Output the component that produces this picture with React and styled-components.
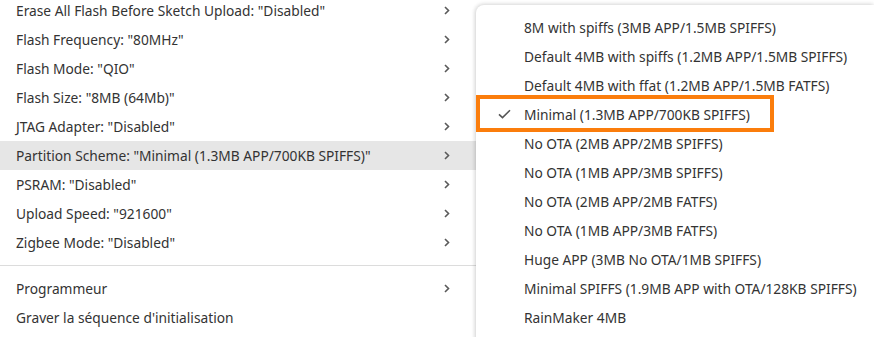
import React from "react";
import styled, { createGlobalStyle } from "styled-components";

const GlobalStyle = createGlobalStyle`
  html, body { margin: 0; padding: 0; background: #ffffff; overflow: hidden; }
  body { font-family: "Noto Sans", "Open Sans", sans-serif; font-size: 13.75px; color: #333333; }
`;

const Screen = styled.div`
  display: flex;
  align-items: flex-start;
  width: 874px;
  height: 337px;
  overflow: hidden;
  background: #ffffff;
`;

const MainMenu = styled.div`
  flex: 0 0 476px;
  margin-top: -4px;
  display: flex;
  flex-direction: column;
  background: #ffffff;
`;

const MenuRow = styled.div`
  height: 29px;
  display: flex;
  align-items: center;
  justify-content: space-between;
  padding: 0 26px 0 16px;
  white-space: nowrap;
  background: ${(p) => (p.$active ? "#e6e6e6" : "transparent")};
`;

const Separator = styled.div`
  height: 1px;
  margin: 8px 0;
  background: #dcdcdc;
`;

const Chevron = styled.svg`
  width: 6px;
  height: 9px;
  flex: none;
`;

const SubMenu = styled.div`
  flex: 1;
  margin-top: 5px;
  height: 360px;
  padding-top: 7.5px;
  display: flex;
  flex-direction: column;
  background: #ffffff;
  border-top-left-radius: 8px;
  box-shadow: -1px 0 4px rgba(0, 0, 0, 0.14), 0 -1px 5px rgba(0, 0, 0, 0.08);
`;

const SubRow = styled.div`
  position: relative;
  height: 29px;
  display: flex;
  align-items: center;
  white-space: nowrap;
`;

const CheckSlot = styled.div`
  width: 48px;
  flex: none;
  box-sizing: border-box;
  display: flex;
  justify-content: flex-start;
  padding-left: 22px;
`;

const Highlight = styled.div`
  position: absolute;
  left: 0;
  top: -4.5px;
  width: 298px;
  height: 37px;
  box-sizing: border-box;
  border: 4px solid #fb7d0c;
  pointer-events: none;
`;

const ChevronIcon = () => (
  <Chevron viewBox="0 0 6 9">
    <polyline points="1,1 4.5,4.5 1,8" fill="none" stroke="#5a5a5a" strokeWidth="1.6" />
  </Chevron>
);

const CheckIcon = () => (
  <svg width="13" height="10" viewBox="0 0 13 10">
    <polyline points="1,5.3 4.5,8.6 12,1.2" fill="none" stroke="#555" strokeWidth="1.6" />
  </svg>
);

const mainItems = [
  'Erase All Flash Before Sketch Upload: "Disabled"',
  'Flash Frequency: "80MHz"',
  'Flash Mode: "QIO"',
  'Flash Size: "8MB (64Mb)"',
  'JTAG Adapter: "Disabled"',
  'Partition Scheme: "Minimal (1.3MB APP/700KB SPIFFS)"',
  'PSRAM: "Disabled"',
  'Upload Speed: "921600"',
  'Zigbee Mode: "Disabled"',
];

const subItems = [
  "8M with spiffs (3MB APP/1.5MB SPIFFS)",
  "Default 4MB with spiffs (1.2MB APP/1.5MB SPIFFS)",
  "Default 4MB with ffat (1.2MB APP/1.5MB FATFS)",
  "Minimal (1.3MB APP/700KB SPIFFS)",
  "No OTA (2MB APP/2MB SPIFFS)",
  "No OTA (1MB APP/3MB SPIFFS)",
  "No OTA (2MB APP/2MB FATFS)",
  "No OTA (1MB APP/3MB FATFS)",
  "Huge APP (3MB No OTA/1MB SPIFFS)",
  "Minimal SPIFFS (1.9MB APP with OTA/128KB SPIFFS)",
  "RainMaker 4MB",
];

export default function App() {
  return (
    <>
      <GlobalStyle />
      <Screen>
        <MainMenu>
          {mainItems.map((t, i) => (
            <MenuRow key={t} $active={i === 5}>
              <span>{t}</span>
              <ChevronIcon />
            </MenuRow>
          ))}
          <Separator />
          <MenuRow>
            <span>Programmeur</span>
            <ChevronIcon />
          </MenuRow>
          <MenuRow>
            <span>Graver la séquence d'initialisation</span>
          </MenuRow>
        </MainMenu>
        <SubMenu>
          {subItems.map((t, i) => (
            <SubRow key={t}>
              <CheckSlot>{i === 3 && <CheckIcon />}</CheckSlot>
              <span>{t}</span>
              {i === 3 && <Highlight />}
            </SubRow>
          ))}
        </SubMenu>
      </Screen>
    </>
  );
}
